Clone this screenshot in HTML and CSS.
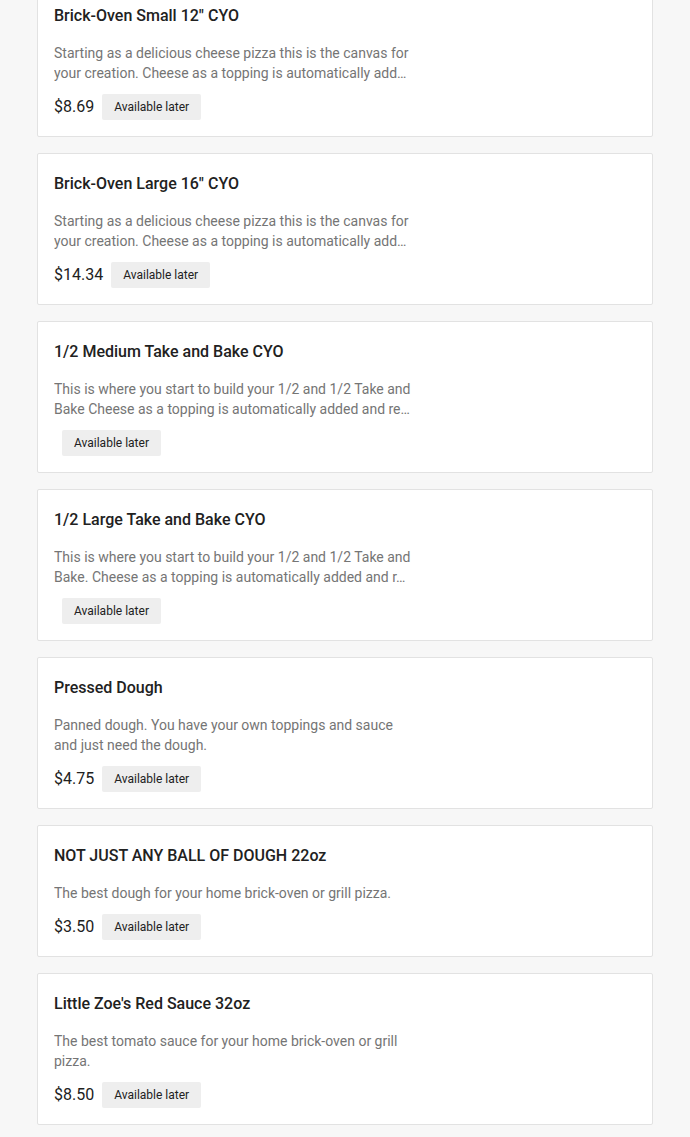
FILE: index.html
```html
<!DOCTYPE html>
<html>
<head>
<meta charset="utf-8">
<link rel="stylesheet" href="styles.css">
</head>
<body>
<div class="list">
  <div class="card">
    <div class="info">
      <div class="title">Brick-Oven Small 12" CYO</div>
      <div class="desc">Starting as a delicious cheese pizza this is the canvas for your creation. Cheese as a topping is automatically add…</div>
      <div class="meta"><span class="price">$8.69</span><span class="badge">Available later</span></div>
    </div>
  </div>
  <div class="card">
    <div class="info">
      <div class="title">Brick-Oven Large 16" CYO</div>
      <div class="desc">Starting as a delicious cheese pizza this is the canvas for your creation. Cheese as a topping is automatically add…</div>
      <div class="meta"><span class="price">$14.34</span><span class="badge">Available later</span></div>
    </div>
  </div>
  <div class="card">
    <div class="info">
      <div class="title">1/2 Medium Take and Bake CYO</div>
      <div class="desc">This is where you start to build your 1/2 and 1/2 Take and Bake Cheese as a topping is automatically added and re…</div>
      <div class="meta"><span class="price"></span><span class="badge">Available later</span></div>
    </div>
  </div>
  <div class="card">
    <div class="info">
      <div class="title">1/2 Large Take and Bake CYO</div>
      <div class="desc">This is where you start to build your 1/2 and 1/2 Take and Bake. Cheese as a topping is automatically added and r…</div>
      <div class="meta"><span class="price"></span><span class="badge">Available later</span></div>
    </div>
  </div>
  <div class="card">
    <div class="info">
      <div class="title">Pressed Dough</div>
      <div class="desc">Panned dough. You have your own toppings and sauce and just need the dough.</div>
      <div class="meta"><span class="price">$4.75</span><span class="badge">Available later</span></div>
    </div>
  </div>
  <div class="card">
    <div class="info">
      <div class="title">NOT JUST ANY BALL OF DOUGH 22oz</div>
      <div class="desc">The best dough for your home brick-oven or grill pizza.</div>
      <div class="meta"><span class="price">$3.50</span><span class="badge">Available later</span></div>
    </div>
  </div>
  <div class="card">
    <div class="info">
      <div class="title">Little Zoe's Red Sauce 32oz</div>
      <div class="desc">The best tomato sauce for your home brick-oven or grill pizza.</div>
      <div class="meta"><span class="price">$8.50</span><span class="badge">Available later</span></div>
    </div>
  </div>
</div>
</body>
</html>
```
FILE: styles.css
```css
html, body {
  margin: 0;
  padding: 0;
  background: #f7f7f7;
  font-family: Roboto, "Liberation Sans", sans-serif;
  color: #212121;
}
.list {
  display: flex;
  flex-direction: column;
  gap: 16px;
  width: 616px;
  margin: -15px 0 0 37px;
  padding-bottom: 12px;
}
.card {
  box-sizing: border-box;
  background: #ffffff;
  border: 1px solid #e2e2e2;
  border-radius: 2px;
  padding: 18px 16px 15px;
  display: flex;
}
.info {
  width: 360px;
  display: flex;
  flex-direction: column;
}
.title {
  font-size: 16px;
  font-weight: 500;
  line-height: 24px;
  color: #212121;
}
.desc {
  margin-top: 15px;
  font-size: 14px;
  line-height: 20px;
  color: #757575;
  max-height: 40px;
  overflow: hidden;
}
.meta {
  margin-top: 10px;
  height: 28px;
  display: flex;
  align-items: center;
}
.price {
  font-size: 16px;
  line-height: 24px;
  color: #212121;
}
.badge {
  margin-left: 8px;
  background: #eeeeee;
  border-radius: 2px;
  font-size: 12px;
  line-height: 26px;
  height: 26px;
  padding: 0 12px;
  color: #212121;
}
```
